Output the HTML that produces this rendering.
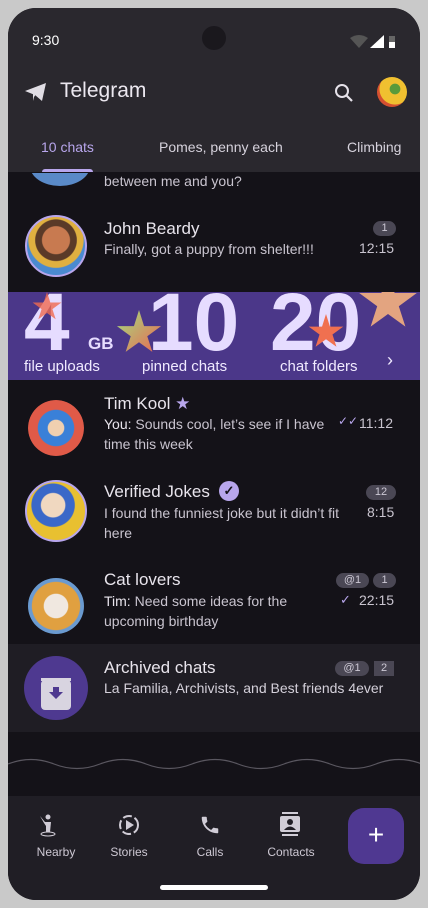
<!DOCTYPE html>
<html><head><meta charset="utf-8"><style>
*{margin:0;padding:0;box-sizing:border-box}
body{width:428px;height:908px;background:#c9c9c9;font-family:"Liberation Sans",sans-serif;overflow:hidden;position:relative}
.scr{position:absolute;left:8px;top:8px;width:412px;height:892px;border-radius:28px;background:#141218;overflow:hidden}
.a{position:absolute}
.hdr{left:0;top:0;width:412px;height:164px;background:#2a282e}
.t{position:absolute;white-space:nowrap}
.name{font-size:17px;color:#e8e4ec}
.msg{font-size:14px;color:#c9c4cf;line-height:20px}
.time{font-size:14px;color:#c9c4cf}
.badge{position:absolute;height:15px;border-radius:8px;background:#4a4754;color:#ccc8d4;font-size:11px;text-align:center;line-height:15px}
.av{position:absolute;border-radius:50%;overflow:hidden}
.nav{font-size:12px;color:#cdc8d3;text-align:center;width:80px}
</style></head><body>
<div class="scr">
<div class="a hdr"></div>
<div class="t" style="left:24px;top:24px;font-size:14px;color:#fff">9:30</div>
<div class="a" style="left:194px;top:18px;width:24px;height:24px;border-radius:50%;background:#1a181d"></div>
<svg class="a" style="left:342px;top:26px" width="50" height="16"><path d="M0 4 Q9 -2 18 4 L9 14Z" fill="#555"/><path d="M20 14 L34 14 L34 1Z" fill="#fff"/><rect x="39" y="2" width="6" height="12" fill="#666"/><rect x="39" y="8" width="6" height="6" fill="#fff"/></svg>
<svg class="a" style="left:16px;top:73px" width="24" height="22" viewBox="0 0 24 22"><path d="M1 10 L22 2 L18 20 L11 14 Z M9 12 L18 5 L10 16 L9 20Z" fill="#e0dde4"/></svg>
<div class="t" style="left:52px;top:71px;font-size:21px;color:#ece8f0">Telegram</div>
<svg class="a" style="left:325px;top:74px" width="22" height="22"><circle cx="9" cy="9" r="6" stroke="#e6e2ea" stroke-width="2" fill="none"/><path d="M13.5 13.5 L19 19" stroke="#e6e2ea" stroke-width="2.2"/></svg>
<div class="av" style="left:369px;top:69px;width:30px;height:30px;background:radial-gradient(circle at 60% 40%,#5a9a3a 0 20%,#f0c030 22% 60%,#d55030 62%)"></div>
<div class="t" style="left:33px;top:131px;font-size:14px;color:#b8a6ec">10 chats</div>
<div class="t" style="left:151px;top:131px;font-size:14px;color:#d6d2dc">Pomes, penny each</div>
<div class="t" style="left:339px;top:131px;font-size:14px;color:#d6d2dc">Climbing</div>
<div class="a" style="left:34px;top:161px;width:51px;height:3px;border-radius:3px 3px 0 0;background:#b8a6ec"></div>
<div class="av" style="left:22px;top:138px;width:60px;height:40px;background:#5a8ac8;clip-path:inset(27px 0 0 0)"></div>
<div class="t msg" style="left:96px;top:163px">between me and you?</div>
<div class="av" style="left:17px;top:207px;width:62px;height:62px;border:2px solid #b8a6ec;background:radial-gradient(circle at 50% 40%,#c87a50 0 30%,#5a3a28 32% 45%,#e0b040 47% 60%,#4a8ad0 62%)"></div>
<div class="t name" style="left:96px;top:211px">John Beardy</div>
<div class="t msg" style="left:96px;top:231px">Finally, got a puppy from shelter!!!</div>
<div class="badge" style="left:365px;top:213px;width:23px">1</div>
<div class="t time" style="left:351px;top:232px">12:15</div>
<div class="a" style="left:0;top:284px;width:412px;height:88px;background:#4b3789;overflow:hidden">
 <div class="a" style="left:16px;top:-10px;font-size:82px;font-weight:bold;color:#e6dcff;line-height:82px">4</div>
 <div class="a" style="left:80px;top:42px;font-size:17px;font-weight:bold;color:#e6dcff">GB</div>
 <div class="a" style="left:140px;top:-10px;font-size:82px;font-weight:bold;color:#e6dcff;line-height:82px">10</div>
 <div class="a" style="left:262px;top:-10px;font-size:82px;font-weight:bold;color:#e6dcff;line-height:82px">20</div>
 <div class="a" style="left:24px;top:0;width:30px;height:30px;background:#f06a50;opacity:.8;clip-path:polygon(50% 0,61% 35%,98% 35%,68% 57%,79% 91%,50% 70%,21% 91%,32% 57%,2% 35%,39% 35%)"></div>
 <div class="a" style="left:108px;top:18px;width:46px;height:46px;background:linear-gradient(135deg,#9fe080,#f06050);clip-path:polygon(50% 0,61% 35%,98% 35%,68% 57%,79% 91%,50% 70%,21% 91%,32% 57%,2% 35%,39% 35%)"></div>
 <div class="a" style="left:300px;top:22px;width:36px;height:36px;background:#f07050;clip-path:polygon(50% 0,61% 35%,98% 35%,68% 57%,79% 91%,50% 70%,21% 91%,32% 57%,2% 35%,39% 35%)"></div>
 <div class="a" style="left:350px;top:-20px;width:60px;height:60px;background:#f4b080;opacity:.9;clip-path:polygon(50% 0,61% 35%,98% 35%,68% 57%,79% 91%,50% 70%,21% 91%,32% 57%,2% 35%,39% 35%)"></div>
 <div class="a" style="left:16px;top:66px;font-size:15px;color:#f0eaff">file uploads</div>
 <div class="a" style="left:134px;top:66px;font-size:15px;color:#f0eaff">pinned chats</div>
 <div class="a" style="left:272px;top:66px;font-size:15px;color:#f0eaff">chat folders</div>
 <div class="a" style="left:379px;top:58px;font-size:18px;color:#f0eaff">›</div>
</div>
<div class="av" style="left:20px;top:392px;width:56px;height:56px;background:radial-gradient(circle at 50% 50%,#f0d0b0 0 20%,#3a80d8 22% 45%,#e05a48 47% 70%,#141218 72%)"></div>
<div class="t name" style="left:96px;top:386px">Tim Kool <span style="color:#b8a6ec">★</span></div>
<div class="t msg" style="left:96px;top:406px"><span style="color:#e8e4ec">You:</span> Sounds cool, let’s see if I have</div>
<div class="t msg" style="left:96px;top:426px">time this week</div>
<div class="t" style="left:330px;top:406px;font-size:12px;color:#b8a6ec">✓✓</div>
<div class="t time" style="left:351px;top:407px">11:12</div>
<div class="av" style="left:17px;top:472px;width:62px;height:62px;border:2px solid #b8a6ec;background:radial-gradient(circle at 45% 40%,#f0d8c0 0 25%,#3a68c8 27% 45%,#e8c030 47% 80%,#d03a30 82%)"></div>
<div class="t name" style="left:96px;top:474px">Verified Jokes</div>
<div class="a" style="left:211px;top:473px;width:20px;height:20px;border-radius:50%;background:#b8a6ec;color:#141218;font-size:13px;text-align:center;line-height:20px;font-weight:bold">✓</div>
<div class="badge" style="left:358px;top:477px;width:30px">12</div>
<div class="t msg" style="left:96px;top:495px">I found the funniest joke but it didn’t fit</div>
<div class="t msg" style="left:96px;top:515px">here</div>
<div class="t time" style="left:359px;top:496px">8:15</div>
<div class="av" style="left:20px;top:570px;width:56px;height:56px;background:radial-gradient(circle at 50% 50%,#f0e8e0 0 30%,#e0a040 32% 60%,#6a9ad0 62%)"></div>
<div class="t name" style="left:96px;top:562px">Cat lovers</div>
<div class="badge" style="left:328px;top:565px;width:33px">@1</div>
<div class="badge" style="left:365px;top:565px;width:23px">1</div>
<div class="t msg" style="left:96px;top:583px"><span style="color:#e8e4ec">Tim:</span> Need some ideas for the</div>
<div class="t msg" style="left:96px;top:603px">upcoming birthday</div>
<div class="t" style="left:332px;top:584px;font-size:13px;color:#b8a6ec">✓</div>
<div class="t time" style="left:351px;top:584px">22:15</div>
<div class="a" style="left:0;top:636px;width:412px;height:88px;background:#1f1d24"></div>
<div class="av" style="left:16px;top:648px;width:64px;height:64px;background:#4e3990"></div>
<div class="a" style="left:33px;top:672px;width:30px;height:30px;border-radius:4px;background:#d8d4e0"></div>
<div class="a" style="left:33px;top:670px;width:30px;height:3px;background:#d8d4e0"></div>
<svg class="a" style="left:40px;top:678px" width="16" height="16"><path d="M5 1 H11 V6 H15 L8 13 L1 6 H5Z" fill="#4e3990"/></svg>
<div class="t name" style="left:96px;top:650px">Archived chats</div>
<div class="badge" style="left:327px;top:653px;width:34px">@1</div>
<div class="badge" style="left:366px;top:653px;width:20px;border-radius:0">2</div>
<div class="t msg" style="left:96px;top:670px;color:#d4d0da">La Familia, Archivists, and Best friends 4ever</div>
<svg class="a" style="left:0;top:748px" width="412" height="16"><path d="M0 8 q23 -9 46 0 t46 0 t46 0 t46 0 t46 0 t46 0 t46 0 t46 0 t46 0" stroke="#5a5760" stroke-width="1.2" fill="none"/></svg>
<div class="a" style="left:0;top:788px;width:412px;height:104px;background:#201e25"></div>
<svg class="a" style="left:30px;top:806px" width="22" height="24"><circle cx="10" cy="3" r="2.5" fill="#d0ccd6"/><path d="M2 2 L7 8 H13 L12 18 H8 L8 12 L6 9Z" fill="#d0ccd6"/><ellipse cx="10" cy="20" rx="7" ry="2" stroke="#d0ccd6" fill="none"/></svg>
<div class="t nav" style="left:8px;top:837px">Nearby</div>
<svg class="a" style="left:110px;top:806px" width="22" height="22"><circle cx="11" cy="11" r="9" stroke="#d0ccd6" stroke-width="2" fill="none" stroke-dasharray="9 3"/><path d="M8 6 L16 11 L8 16Z" fill="#d0ccd6"/></svg>
<div class="t nav" style="left:81px;top:837px">Stories</div>
<svg class="a" style="left:191px;top:806px" width="22" height="22" viewBox="0 0 24 24"><path d="M6.6 10.8c1.4 2.8 3.8 5.1 6.6 6.6l2.2-2.2c.3-.3.7-.4 1-.2 1.1.4 2.3.6 3.6.6.6 0 1 .4 1 1V20c0 .6-.4 1-1 1C10.6 21 3 13.4 3 4c0-.6.4-1 1-1h3.5c.6 0 1 .4 1 1 0 1.3.2 2.5.6 3.6.1.3 0 .7-.2 1z" fill="#d0ccd6"/></svg>
<div class="t nav" style="left:162px;top:837px">Calls</div>
<svg class="a" style="left:272px;top:804px" width="20" height="24"><rect x="2" y="0" width="16" height="2" fill="#d0ccd6"/><rect x="2" y="22" width="16" height="2" fill="#d0ccd6"/><rect x="0" y="4" width="20" height="16" rx="2" fill="#d0ccd6"/><circle cx="10" cy="10" r="3" fill="#201e25"/><path d="M4 18 q6 -7 12 0Z" fill="#201e25"/></svg>
<div class="t nav" style="left:243px;top:837px">Contacts</div>
<div class="a" style="left:340px;top:800px;width:56px;height:56px;border-radius:16px;background:#4f3891;color:#fff;font-size:28px;text-align:center;line-height:54px">+</div>
<div class="a" style="left:152px;top:877px;width:108px;height:5px;border-radius:3px;background:#fff"></div>
</div>
</body></html>
